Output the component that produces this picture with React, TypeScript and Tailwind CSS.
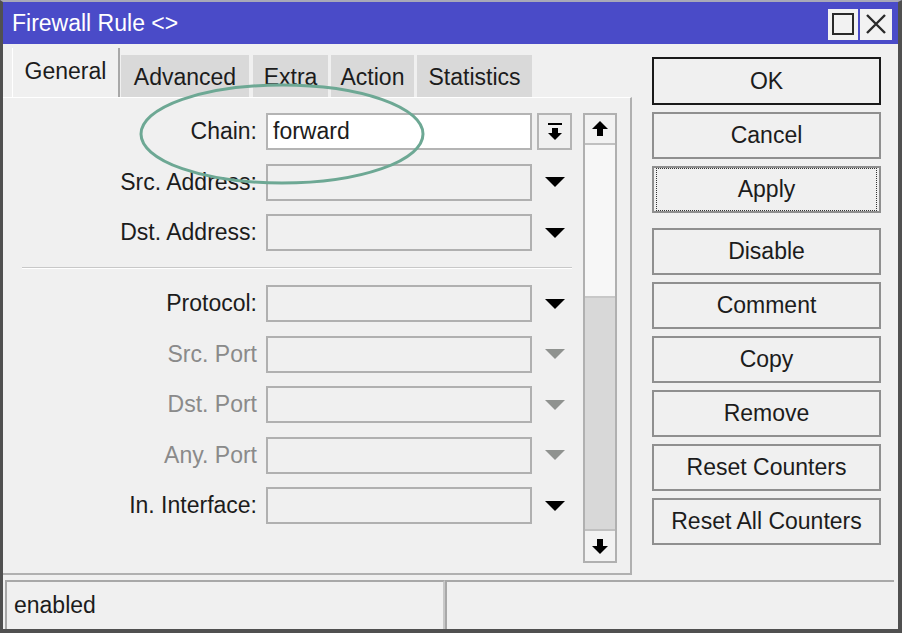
import React from "react";

const Tri = ({ gray }: { gray?: boolean }) => (
  <svg width="20" height="10" viewBox="0 0 20 10">
    <polygon points="0,0 20,0 10,10" fill={gray ? "#8f928f" : "#000"} />
  </svg>
);

const Row = ({
  label,
  disabled,
  value,
  chain,
}: {
  label: string;
  disabled?: boolean;
  value?: string;
  chain?: boolean;
}) => (
  <div className="flex items-center h-[37px]">
    <div
      className={`w-[254px] text-right text-[23px] leading-none whitespace-nowrap ${
        disabled ? "text-[#8a8a8a]" : "text-[#1c1c1c]"
      }`}
    >
      {label}
    </div>
    <div
      className={`ml-[9px] w-[266px] h-[37px] border-2 flex items-center pl-[5px] text-[23px] leading-none text-[#1c1c1c] ${
        chain ? "bg-white border-[#b4b4b4]" : "bg-[#f0f0f0] border-[#b0b0b0]"
      }`}
    >
      {value}
    </div>
    {chain ? (
      <div className="ml-[5px] w-[35px] h-[37px] border-2 border-[#b4b4b4] bg-[#f0f0f0] flex items-center justify-center">
        <svg width="18" height="20" viewBox="0 0 18 20">
          <rect x="2" y="1" width="14" height="2" fill="#000" />
          <rect x="6" y="6" width="6" height="6" fill="#000" />
          <polygon points="2,11 16,11 9,18" fill="#000" />
        </svg>
      </div>
    ) : (
      <div className="ml-[5px] w-[35px] h-[37px] flex items-center justify-center">
        <Tri gray={disabled} />
      </div>
    )}
  </div>
);

const Btn = ({
  children,
  ok,
  focus,
  className = "",
}: {
  children: React.ReactNode;
  ok?: boolean;
  focus?: boolean;
  className?: string;
}) => (
  <div
    className={`w-[229px] h-[47px] border-2 bg-[#f0f0f0] flex items-center justify-center text-[23px] leading-none text-[#1c1c1c] ${
      ok ? "border-[#1a1a1a] h-[48px]" : "border-[#8f8f8f]"
    } ${className}`}
  >
    {focus ? (
      <div className="w-full h-full m-[2px] border border-dotted border-[#333] flex items-center justify-center">
        {children}
      </div>
    ) : (
      children
    )}
  </div>
);

export default function App() {
  return (
    <div className="w-[902px] h-[633px] bg-[#f0f0f0] font-['Liberation_Sans',Arial,sans-serif] flex flex-col border-l-[3px] border-r-[4px] border-b-[4px] border-t-[2px] border-[#505050] border-t-[#a8a8b8] relative overflow-hidden">
      {/* Title bar */}
      <div className="h-[42px] bg-[#4a4bc8] flex items-center pl-[9px] pr-[6px] shrink-0">
        <span className="text-white text-[23px] leading-none">Firewall Rule &lt;&gt;</span>
        <div className="ml-auto flex gap-[2px] mt-[2px]">
          <div className="w-[30px] h-[31px] bg-[#f2f2f2] flex items-center justify-center">
            <div className="w-[22px] h-[22px] border-[2px] border-[#2a2a2a]" />
          </div>
          <div className="w-[32px] h-[31px] bg-[#f2f2f2] flex items-center justify-center">
            <svg width="22" height="22" viewBox="0 0 22 22">
              <path d="M2 2 L20 20 M20 2 L2 20" stroke="#2a2a2a" strokeWidth="2.4" />
            </svg>
          </div>
        </div>
      </div>

      {/* Main */}
      <div className="flex h-[534px] shrink-0">
        <div className="w-[629px] flex flex-col">
          {/* Tabs */}
          <div className="flex items-end h-[49px] mt-[4px] pl-[9px]">
            <div className="h-[49px] w-[108px] bg-[#f0f0f0] border-r-2 border-[#a8a8a8] border-l border-l-white flex items-center justify-center text-[23px] leading-none text-[#1c1c1c] pb-[2px]">
              General
            </div>
            <div className="h-[42px] w-[128px] ml-[1px] bg-[#d9d9d9] flex items-center justify-center text-[23px] leading-none text-[#1c1c1c] pt-[2px]">
              Advanced
            </div>
            <div className="h-[42px] w-[75px] ml-[4px] bg-[#d9d9d9] flex items-center justify-center text-[23px] leading-none text-[#1c1c1c] pt-[2px]">
              Extra
            </div>
            <div className="h-[42px] w-[83px] ml-[3px] bg-[#d9d9d9] flex items-center justify-center text-[23px] leading-none text-[#1c1c1c] pt-[2px]">
              Action
            </div>
            <div className="h-[42px] w-[115px] ml-[3px] bg-[#d9d9d9] flex items-center justify-center text-[23px] leading-none text-[#1c1c1c] pt-[2px]">
              Statistics
            </div>
          </div>
          {/* Panel */}
          <div className="h-[478px] border-t border-t-white border-r-2 border-r-[#b0b0b0] border-b-2 border-b-[#b0b0b0] flex pt-[15px]">
            <div className="flex flex-col gap-[13.5px] w-[572px]">
              <Row label="Chain:" value="forward" chain />
              <Row label="Src. Address:" />
              <Row label="Dst. Address:" />
              <div className="h-[7px] flex items-center">
                <div className="ml-[19px] w-[550px] h-[2px] bg-[#c8c8c8] border-b border-white" />
              </div>
              <Row label="Protocol:" />
              <Row label="Src. Port" disabled />
              <Row label="Dst. Port" disabled />
              <Row label="Any. Port" disabled />
              <Row label="In. Interface:" />
            </div>
            {/* Scrollbar */}
            <div className="ml-[8px] w-[34px] h-[450px] border-2 border-[#b0b0b0] flex flex-col bg-[#f0f0f0]">
              <div className="h-[30px] border-b-2 border-[#c0c0c0] flex items-center justify-center bg-[#f2f2f2]">
                <svg width="18" height="18" viewBox="0 0 18 18">
                  <polygon points="9,1 17,9 1,9" fill="#000" />
                  <rect x="6" y="9" width="6" height="7" fill="#000" />
                </svg>
              </div>
              <div className="h-[153px] bg-[#f7f7f7] border-b-2 border-[#c8c8c8]" />
              <div className="flex-1 bg-[#d8d8d8]" />
              <div className="h-[32px] border-t-2 border-[#c0c0c0] flex items-center justify-center bg-[#f2f2f2]">
                <svg width="18" height="18" viewBox="0 0 18 18">
                  <rect x="6" y="2" width="6" height="7" fill="#000" />
                  <polygon points="1,9 17,9 9,17" fill="#000" />
                </svg>
              </div>
            </div>
          </div>
        </div>

        {/* Buttons */}
        <div className="ml-[20px] pt-[13px] flex flex-col">
          <Btn ok>OK</Btn>
          <Btn className="mt-[7px]">Cancel</Btn>
          <Btn className="mt-[7px]" focus>
            Apply
          </Btn>
          <Btn className="mt-[15px]">Disable</Btn>
          <Btn className="mt-[7px]">Comment</Btn>
          <Btn className="mt-[7px]">Copy</Btn>
          <Btn className="mt-[7px]">Remove</Btn>
          <Btn className="mt-[7px]">Reset Counters</Btn>
          <Btn className="mt-[7px]">Reset All Counters</Btn>
        </div>
      </div>

      {/* Status bar */}
      <div className="flex-1 flex pt-[2px] pl-[2px] pr-[4px]">
        <div className="w-[440px] border-t-2 border-l-2 border-r-2 border-[#a8a8a8] border-r-[#c8c8c8] flex items-center pl-[7px] text-[23px] leading-none text-[#1c1c1c]">
          enabled
        </div>
        <div className="flex-1 border-t-2 border-l-2 border-[#a8a8a8]" />
      </div>

      {/* Green annotation ellipse */}
      <svg
        className="absolute left-[134px] top-[80px] pointer-events-none"
        width="290"
        height="106"
        viewBox="0 0 290 106"
      >
        <ellipse cx="145" cy="52" rx="141" ry="49" fill="none" stroke="#6da894" strokeWidth="3" />
      </svg>
    </div>
  );
}
